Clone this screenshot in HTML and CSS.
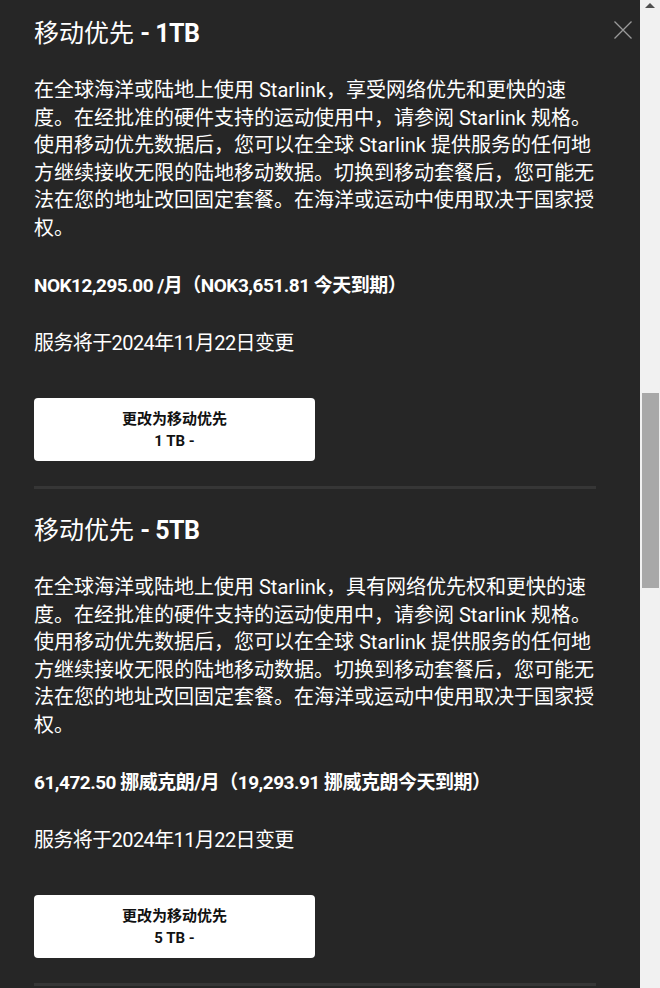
FILE: index.html
```html
<!DOCTYPE html>
<html lang="zh-CN">

<head>
  <meta charset="UTF-8">
  <title>更改套餐</title>
  <link rel="stylesheet" href="styles.css">
</head>

<body>
  <div class="page">
    <div class="panel">
      <!--关闭按钮-->
      <a href="#" class="close" title="关闭">
        <svg width="18" height="18" viewBox="0 0 18 18">
          <path d="M0.5 0.5 L17.5 17.5 M17.5 0.5 L0.5 17.5" stroke="#9a9a9a" stroke-width="1.3" fill="none" />
        </svg>
      </a>

      <div class="plan">
        <h2>移动优先 <b>- 1TB</b></h2>
        <p class="desc">在全球海洋或陆地上使用 Starlink，享受网络优先和更快的速度。在经批准的硬件支持的运动使用中，请参阅 Starlink 规格。使用移动优先数据后，您可以在全球 Starlink 提供服务的任何地方继续接收无限的陆地移动数据。切换到移动套餐后，您可能无法在您的地址改回固定套餐。在海洋或运动中使用取决于国家授权。</p>
        <p class="price">NOK12,295.00 /月（NOK3,651.81 今天到期）</p>
        <p class="date">服务将于2024年11月22日变更</p>
        <a href="#" class="btn">
          <span>更改为移动优先</span>
          <span>1 TB -</span>
        </a>
      </div>

      <div class="plan">
        <h2>移动优先 <b>- 5TB</b></h2>
        <p class="desc">在全球海洋或陆地上使用 Starlink，具有网络优先权和更快的速度。在经批准的硬件支持的运动使用中，请参阅 Starlink 规格。使用移动优先数据后，您可以在全球 Starlink 提供服务的任何地方继续接收无限的陆地移动数据。切换到移动套餐后，您可能无法在您的地址改回固定套餐。在海洋或运动中使用取决于国家授权。</p>
        <p class="price">61,472.50 挪威克朗/月（19,293.91 挪威克朗今天到期）</p>
        <p class="date">服务将于2024年11月22日变更</p>
        <a href="#" class="btn">
          <span>更改为移动优先</span>
          <span>5 TB -</span>
        </a>
      </div>
    </div>

    <!--滚动条-->
    <div class="scrollbar">
      <span class="arrow"></span>
      <span class="thumb"></span>
    </div>
  </div>
</body>

</html>
```

FILE: styles.css
```css
* {
  margin: 0;
  padding: 0
}

html,
body {
  height: 100%;
  overflow: hidden;
}

body {
  background-color: #262626;
  color: #fff;
  font-family: Roboto, "Noto Sans CJK SC", sans-serif;
}

.page {
  display: flex;
  height: 988px;
}

.panel {
  position: relative;
  width: 640px;
  padding: 0 44px 0 34px;
  box-sizing: border-box;
  background-color: #262626;
}

.close {
  position: absolute;
  top: 21px;
  left: 614px;
  width: 18px;
  height: 18px;
}

.close svg {
  display: block;
}

.plan {
  padding: 26px 0 25px;
  border-bottom: 3px solid #363636;
}

.plan:first-of-type {
  padding-top: 18px;
}

.plan h2 {
  font-size: 25px;
  line-height: 32px;
  font-weight: 400;
  margin-bottom: 27px;
}

.plan h2 b {
  font-weight: 700;
  letter-spacing: -0.5px;
}

.desc {
  font-size: 20px;
  line-height: 27.5px;
  margin-bottom: 30px;
}

.price {
  font-size: 19px;
  line-height: 27.5px;
  font-weight: 700;
  letter-spacing: -0.5px;
  margin-bottom: 30px;
}

.date {
  font-size: 20px;
  line-height: 27.5px;
  letter-spacing: -0.6px;
  margin-bottom: 41px;
}

.btn {
  display: flex;
  flex-direction: column;
  align-items: center;
  justify-content: center;
  width: 281px;
  height: 63px;
  background-color: #fff;
  border-radius: 4px;
  color: #111;
  font-size: 15px;
  line-height: 22px;
  font-weight: 700;
  text-decoration: none;
}

.scrollbar {
  display: flex;
  flex-direction: column;
  align-items: center;
  width: 20px;
  background-color: #f1f1f1;
}

.arrow {
  width: 0;
  height: 0;
  margin-top: 3px;
  border-left: 5px solid transparent;
  border-right: 5px solid transparent;
  border-bottom: 5px solid #505050;
}

.thumb {
  width: 17px;
  height: 195px;
  margin: 385px 0 0 1px;
  background-color: #a8a8a8;
}
```
